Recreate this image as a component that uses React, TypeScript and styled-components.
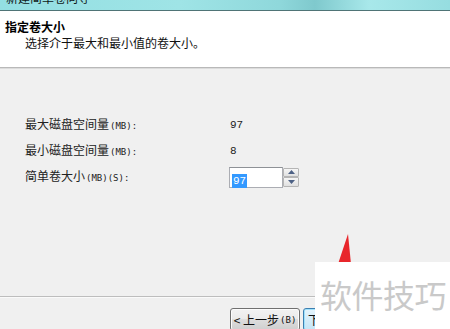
import styled, { createGlobalStyle } from 'styled-components';

const GlobalStyle = createGlobalStyle`
  html, body {
    margin: 0;
    padding: 0;
    background: #f0f0f0;
  }
  * {
    box-sizing: border-box;
  }
`;

const rows = [
  { label: '最大磁盘空间量', unit: '(MB):', value: '97' },
  { label: '最小磁盘空间量', unit: '(MB):', value: '8' },
];

const App = () => {
  return (
    <>
      <GlobalStyle />
      <Window>
        <TitleBar>
          <TitleText>新建简单卷向导</TitleText>
        </TitleBar>
        <Header>
          <HeadTitle>指定卷大小</HeadTitle>
          <HeadSub>选择介于最大和最小值的卷大小。</HeadSub>
        </Header>
        <Body>
          <Grid>
            {rows.map((r) => (
              <Row key={r.label}>
                <Label>
                  {r.label}
                  <Unit>{r.unit}</Unit>
                </Label>
                <Value>{r.value}</Value>
              </Row>
            ))}
            <Row>
              <Label>
                简单卷大小<Unit>(MB)(S):</Unit>
              </Label>
              <SpinBox>
                <SpinInput>
                  <Selected>97</Selected>
                </SpinInput>
                <SpinButtons>
                  <SpinBtn>
                    <svg width="7" height="4" viewBox="0 0 7 4">
                      <polygon points="3.5,0 7,4 0,4" fill="#4d6185" />
                    </svg>
                  </SpinBtn>
                  <SpinBtn>
                    <svg width="7" height="4" viewBox="0 0 7 4">
                      <polygon points="0,0 7,0 3.5,4" fill="#4d6185" />
                    </svg>
                  </SpinBtn>
                </SpinButtons>
              </SpinBox>
            </Row>
          </Grid>
        </Body>
        <Footer>
          <Button>&lt; 上一步<Unit>(B)</Unit></Button>
          <Button primary>下一步<Unit>(N)</Unit> &gt;</Button>
        </Footer>
        <Arrow width="18" height="30" viewBox="0 0 18 30">
          <polygon points="12,0 2,30 15,30" fill="#e8262b" />
        </Arrow>
        <Watermark>软件技巧</Watermark>
      </Window>
    </>
  );
};
export default App;

const Window = styled.div`
  position: relative;
  width: 450px;
  height: 329px;
  overflow: hidden;
  display: flex;
  flex-direction: column;
  background: #f0f0f0;
  font-family: 'Noto Sans CJK SC', 'DejaVu Sans', sans-serif;
  font-size: 12px;
  color: #000;
`;

const TitleBar = styled.div`
  height: 11px;
  flex: none;
  overflow: hidden;
  display: flex;
  align-items: flex-end;
  padding-left: 6px;
  background: linear-gradient(
    to right,
    #93dfe2 0%,
    #9fe4e6 40%,
    #8fd8db 62%,
    #7fc9cd 70%,
    #a8e8ea 82%,
    #96dde0 100%
  );
  border-bottom: 1px solid #4f7476;
`;

const TitleText = styled.div`
  font-size: 12px;
  line-height: 12px;
  margin-bottom: 6px;
  color: #0e1818;
`;

const Header = styled.div`
  height: 57px;
  flex: none;
  background: #fff;
  padding-top: 8px;
  border-bottom: 1px solid #b9b9b9;
  box-shadow: 0 1px 0 #dcdcdc;
`;

const HeadTitle = styled.div`
  padding-left: 5px;
  font-weight: bold;
  line-height: 16px;
`;

const HeadSub = styled.div`
  padding-left: 25px;
  line-height: 16px;
  color: #111;
`;

const Body = styled.div`
  flex: 1;
  padding: 44px 0 0 25px;
  border-bottom: 1px solid #bdbdbd;
  box-shadow: 0 1px 0 #fafafa;
`;

const Grid = styled.div`
  display: flex;
  flex-direction: column;
`;

const Row = styled.div`
  height: 26px;
  display: grid;
  grid-template-columns: 204px auto;
  align-items: center;
`;

const Label = styled.div`
  color: #222;
  line-height: 16px;
`;

const Unit = styled.span`
  font-family: 'DejaVu Sans Mono', monospace;
  font-size: 9px;
  margin-left: 1px;
`;

const Value = styled.div`
  padding-left: 1px;
  font-family: 'Liberation Mono', monospace;
  font-size: 11px;
  color: #222;
`;

const SpinBox = styled.div`
  display: flex;
  height: 21px;
  width: 70px;
`;

const SpinInput = styled.div`
  width: 54px;
  height: 21px;
  background: #fff;
  border: 1px solid #abadb3;
  border-top-color: #8e9196;
  padding: 2px 0 0 2px;
`;

const Selected = styled.span`
  display: inline-block;
  background: #3399ff;
  color: #fff;
  font-family: 'Liberation Mono', monospace;
  font-size: 11px;
  line-height: 14px;
  padding: 0 1px;
`;

const SpinButtons = styled.div`
  display: flex;
  flex-direction: column;
  width: 16px;
  height: 21px;
  padding: 1px 0;
`;

const SpinBtn = styled.div`
  flex: 1;
  display: flex;
  align-items: center;
  justify-content: center;
  background: linear-gradient(#f6f6f6, #e0e0e0);
  border: 1px solid #b5b5b5;
  border-radius: 1px;
`;

const Footer = styled.div`
  height: 32px;
  flex: none;
  display: flex;
  padding: 11px 0 0 230px;
  gap: 3px;
`;

const Button = styled.div<{ primary?: boolean }>`
  width: 70px;
  height: 23px;
  flex: none;
  display: flex;
  align-items: center;
  justify-content: center;
  border: 1px solid ${(p) => (p.primary ? '#3c7fb1' : '#707070')};
  border-radius: 3px;
  background: ${(p) =>
    p.primary
      ? 'linear-gradient(#e5f4fc, #c4e5f6)'
      : 'linear-gradient(#f2f2f2 0%, #ebebeb 45%, #dddddd 50%, #cfcfcf 100%)'};
  box-shadow: inset 0 0 0 1px ${(p) => (p.primary ? '#9fe2fc' : '#fcfcfc')};
  color: #111;
  line-height: 14px;
  white-space: nowrap;
`;

const Arrow = styled.svg`
  position: absolute;
  left: 336px;
  top: 234px;
`;

const Watermark = styled.div`
  position: absolute;
  left: 315px;
  top: 262px;
  right: 0;
  bottom: 0;
  background: #fff;
  padding: 14px 0 0 5px;
  font-size: 32px;
  line-height: 36px;
  color: #c9c9c9;
  white-space: nowrap;
  letter-spacing: -0.5px;
`;
